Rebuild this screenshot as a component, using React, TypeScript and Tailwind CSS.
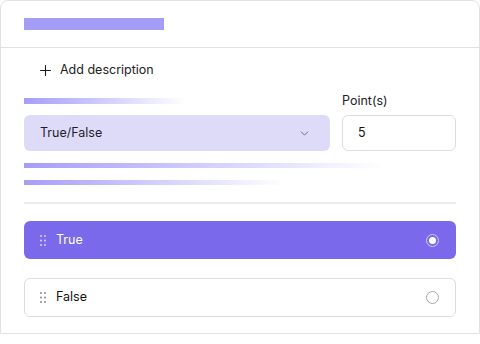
import { Plus, ChevronDown } from 'lucide-react';

function Grip({ color }: { color: string }) {
  return (
    <svg width="6" height="11" viewBox="0 0 6 11" className="flex-shrink-0">
      {[1, 5.5, 10].map(cy => (
        <g key={cy}>
          <circle cx="1" cy={cy} r="1" fill={color} />
          <circle cx="5" cy={cy} r="1" fill={color} />
        </g>
      ))}
    </svg>
  );
}

export default function App() {
  return (
    <div className="w-[480px] h-[344px] bg-white overflow-hidden" style={{ fontFamily: 'Inter, "Noto Sans", sans-serif' }}>
      <div className="border border-[#e2e2e2] rounded-t-lg h-[334px]">
        {/* Header */}
        <div className="h-[47px] px-[23px] pt-[17px] border-b border-[#e2e2e2]">
          <div className="w-[140px] h-3 bg-[#a69df8]" />
        </div>

        <div className="px-[23px]">
          {/* Add description */}
          <div className="flex items-center gap-[6px] pl-[13px] pt-[2px] h-[43px] text-[12.5px] text-[#222]">
            <Plus size={17} strokeWidth={1.5} className="text-[#1a1a1a]" />
            <span>Add description</span>
          </div>

          {/* Type + points */}
          <div className="flex gap-3">
            <div className="flex-1">
              <div className="h-[20px] flex items-center">
                <div className="w-[162px] h-[6px] bg-gradient-to-r from-[#a69df8] to-white" />
              </div>
              <div className="mt-[4px] h-9 bg-[#dedbf9] rounded-md flex items-center justify-between pl-4 pr-[19px] text-[12.5px] text-[#1e1e2a]">
                <span>True/False</span>
                <ChevronDown size={13} strokeWidth={1.5} className="text-[#555]" />
              </div>
            </div>
            <div className="w-[114px]">
              <div className="h-[20px] flex items-center text-[12.5px] text-[#222]">Point(s)</div>
              <div className="mt-[4px] h-9 border border-[#dcdcdc] rounded-md flex items-center pl-[15px] text-[12.5px] text-[#111]">5</div>
            </div>
          </div>

          {/* Placeholder lines */}
          <div className="mt-3 w-[360px] h-[5px] bg-gradient-to-r from-[#a69df8] to-white" />
          <div className="mt-3 w-[260px] h-[5px] bg-gradient-to-r from-[#a69df8] to-white" />

          <div className="mt-[17px] border-t-2 border-[#ececec]" />

          {/* Options */}
          <div className="mt-[17px] flex flex-col gap-[19px]">
            <div className="h-[38px] bg-[#7b69ec] rounded-md flex items-center pl-4 pr-[17px] text-[12.5px] text-white">
              <Grip color="#d9d4fb" />
              <span className="ml-[10px] flex-1">True</span>
              <span className="w-[13px] h-[13px] rounded-full border border-[#cfc8fa] flex items-center justify-center">
                <span className="w-[7px] h-[7px] rounded-full bg-white" />
              </span>
            </div>
            <div className="h-[39px] border border-[#dcdcdc] rounded-md flex items-center pl-[15px] pr-4 text-[12.5px] text-[#111]">
              <Grip color="#888" />
              <span className="ml-[10px] flex-1">False</span>
              <span className="w-[13px] h-[13px] rounded-full border border-[#aaa]" />
            </div>
          </div>
        </div>
      </div>
    </div>
  );
}
